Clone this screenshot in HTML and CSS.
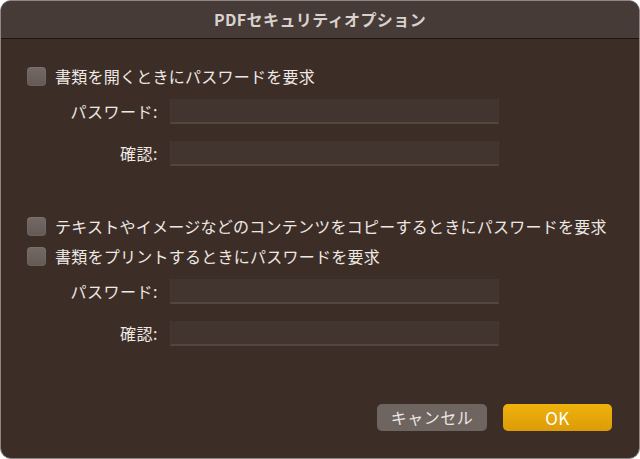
FILE: index.html
```html
<!DOCTYPE html>
<html lang="ja">
<head>
    <meta charset="UTF-8">
    <meta name="viewport" content="width=device-width, initial-scale=1.0">
    <title>PDFセキュリティオプション</title>
    <link rel="stylesheet" href="styles.css">
</head>
<body>

    <div class="window">
        <div class="titlebar">PDFセキュリティオプション</div>

        <div class="content">
            <!-- 書類を開くとき -->
            <label class="check first"><span class="box"></span>書類を開くときにパスワードを要求</label>
            <div class="fields">
                <div class="field"><span class="name">パスワード:</span><span class="input"></span></div>
                <div class="field"><span class="name">確認:</span><span class="input"></span></div>
            </div>

            <!-- コピー / プリント -->
            <label class="check second"><span class="box"></span>テキストやイメージなどのコンテンツをコピーするときにパスワードを要求</label>
            <label class="check third"><span class="box"></span>書類をプリントするときにパスワードを要求</label>
            <div class="fields">
                <div class="field"><span class="name">パスワード:</span><span class="input"></span></div>
                <div class="field"><span class="name">確認:</span><span class="input"></span></div>
            </div>

            <div class="buttons">
                <button class="btn cancel">キャンセル</button>
                <button class="btn ok">OK</button>
            </div>
        </div>
    </div>

</body>
</html>
```

FILE: styles.css
```css
    body, html {
        margin: 0;
        padding: 0;
        background-color: #ffffff;
        font-family: "Noto Sans CJK JP", "Noto Sans", sans-serif;
    }

    .window {
        width: 640px;
        height: 459px;
        box-sizing: border-box;
        border: 1px solid #8f8784;
        border-radius: 11px;
        overflow: hidden;
        background-color: #3c2e27;
        color: #eee8e5;
    }

    .titlebar {
        height: 37px;
        line-height: 37px;
        background-color: #463b37;
        border-bottom: 1px solid #1d1410;
        text-align: center;
        font-size: 16px;
        font-weight: bold;
        color: #d9d1cd;
        letter-spacing: 0.4px;
    }

    .content {
        padding: 28px 27px 0 26px;
    }

    .check {
        display: flex;
        align-items: center;
        height: 19px;
        font-size: 16px;
        line-height: 19px;
        letter-spacing: 0.25px;
        white-space: nowrap;
    }

    .check .box {
        width: 19px;
        height: 19px;
        border-radius: 4px;
        margin-right: 9px;
        background: linear-gradient(#736965, #635955);
        box-shadow: inset 0 0 0 1px rgba(255, 255, 255, 0.05);
        flex-shrink: 0;
    }

    .second {
        margin-top: 51px;
    }

    .third {
        margin-top: 11px;
    }

    .fields {
        margin-top: 12px;
        display: flex;
        flex-direction: column;
        gap: 16px;
    }

    .field {
        display: flex;
        align-items: center;
        height: 26px;
    }

    .field .name {
        width: 131px;
        text-align: right;
        font-size: 16px;
        letter-spacing: 0.5px;
        margin-right: 12px;
    }

    .field .input {
        width: 329px;
        height: 26px;
        box-sizing: border-box;
        background-color: #42342f;
        border-top: 1px solid #3a2d28;
        border-bottom: 2px solid #54453d;
        border-left: 1px solid #463833;
        border-right: 1px solid #463833;
    }

    .buttons {
        margin-top: 58px;
        display: flex;
        justify-content: flex-end;
        gap: 16px;
    }

    .btn {
        height: 27px;
        border: none;
        border-radius: 5px;
        font-family: "Noto Sans CJK JP", "Noto Sans", sans-serif;
        font-size: 16px;
        line-height: 27px;
        letter-spacing: 0.5px;
        padding: 0;
        cursor: pointer;
    }

    .cancel {
        width: 110px;
        background-color: #6e6460;
        color: #ece6e3;
    }

    .ok {
        width: 109px;
        background: linear-gradient(#f0b20c, #db9c08);
        color: #ffffff;
        font-size: 17px;
        font-weight: normal;
    }
```
